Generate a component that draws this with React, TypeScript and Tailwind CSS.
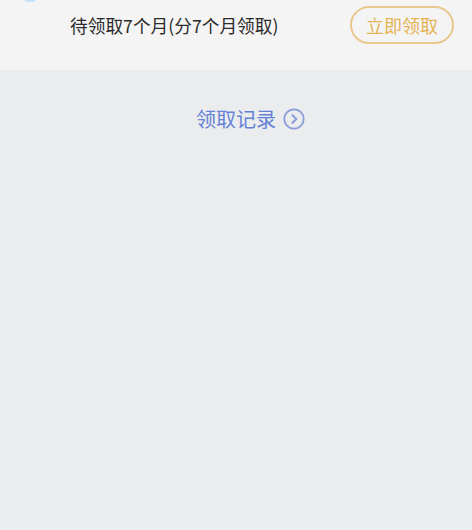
import React from 'react';

export default function App() {
  return (
    <div className="h-[530px] w-[472px] overflow-hidden bg-[#ebecee] font-['Noto_Sans_CJK_SC',sans-serif]">
      <div className="relative flex h-[70px] items-start justify-between bg-[#f4f4f4] pl-[70px] pr-[18px] pt-[6px]">
        {/* cut off avatar at the very top */}
        <div className="absolute left-[24px] top-[-6px] h-[8px] w-[12px] rounded-full bg-[#c4e2f9]" />
        <span className="mt-[7px] text-[17.7px] leading-[24px] text-[#2b2b2b]">
          待领取7个月(分7个月领取)
        </span>
        <button className="flex h-[38px] w-[104px] items-center justify-center rounded-full border-2 border-[#e8c88e] text-[18px] leading-none text-[#e6b354]">
          立即领取
        </button>
      </div>
      <div className="flex items-center gap-[7px] pl-[196px] pt-[35px]">
        <span className="text-[20px] leading-[28px] text-[#6583d6]">领取记录</span>
        <svg width="22" height="22" viewBox="0 0 22 22" fill="none" stroke="#8a9fda">
          <circle cx="11" cy="11" r="9.7" strokeWidth="1.8" />
          <path d="M8.8 6.5 L13.3 11 L8.8 15.5" strokeWidth="2" />
        </svg>
      </div>
    </div>
  );
}
